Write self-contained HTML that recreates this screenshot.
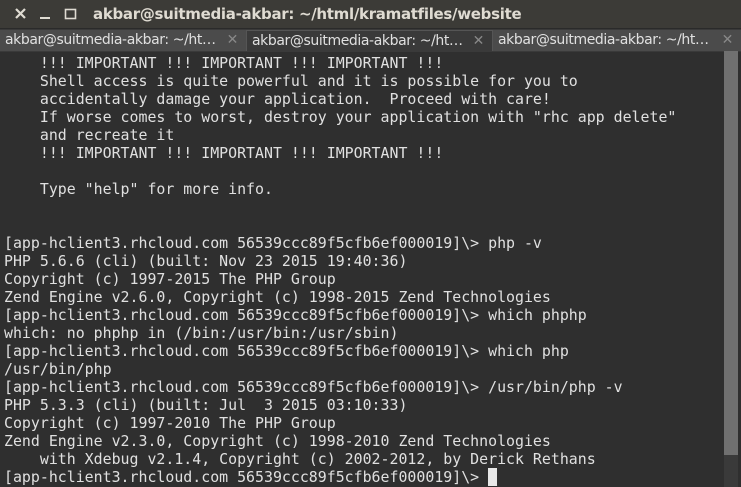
<!DOCTYPE html>
<html><head><meta charset="utf-8"><style>
body{margin:0;width:741px;height:487px;overflow:hidden;background:#2f2f2f;font-family:"Liberation Sans","DejaVu Sans",sans-serif;position:relative}
#title{position:absolute;left:0;top:0;width:741px;height:28px;background:#3c3b37;color:#dfdbd2}
#title .t{position:absolute;left:93px;top:5px;font-weight:bold;font-size:15px;font-family:"DejaVu Sans",sans-serif;letter-spacing:-0.3px}
#tabs{position:absolute;left:0;top:28px;width:741px;height:23px;background:#3a3a3a;border-top:1px solid #2a2a2a}
.tab{position:absolute;top:1px;height:21px;background:#4b4b4b;color:#e0e0e0;font-size:14px;font-family:"DejaVu Sans",sans-serif;line-height:20px;padding-left:5px;box-sizing:border-box;letter-spacing:-0.4px}
.tab.a{background:#3a3a3a;border:1px solid #555;border-bottom:none}
.tab .x{position:absolute;right:8px;top:0;color:#888}
#term{position:absolute;left:4px;top:54px;margin:0;font-family:"DejaVu Sans Mono",monospace;font-size:14.9px;line-height:18px;color:#e0e0e0;white-space:pre}
#sb{position:absolute;left:724px;top:51px;width:14px;height:436px;background:#3a3a3a}
#th{position:absolute;left:724px;top:51px;width:14px;height:404px;background:#707070}
.cur{background:#e8e8e8;color:#e8e8e8}
</style></head><body>
<div id="title">
<svg width="90" height="28" style="position:absolute;left:0;top:0">
<path d="M16 9 L25 18 M25 9 L16 18" stroke="#dfdbd2" stroke-width="2.2"/>
<rect x="40" y="17" width="10" height="2" fill="#dfdbd2"/>
<rect x="65.5" y="9.5" width="10" height="9" fill="none" stroke="#dfdbd2" stroke-width="1.6"/>
</svg>
<div class="t">akbar@suitmedia-akbar: ~/html/kramatfiles/website</div>
</div>
<div id="tabs">
<div class="tab" style="left:0;width:246px">akbar@suitmedia-akbar: ~/ht…<span class="x">✕</span></div>
<div class="tab a" style="left:246px;width:247px">akbar@suitmedia-akbar: ~/ht…<span class="x">✕</span></div>
<div class="tab" style="left:493px;width:248px">akbar@suitmedia-akbar: ~/ht…<span class="x">✕</span></div>
</div>
<div id="sb"></div><div id="th"></div>
<pre id="term">    !!! IMPORTANT !!! IMPORTANT !!! IMPORTANT !!!
    Shell access is quite powerful and it is possible for you to
    accidentally damage your application.  Proceed with care!
    If worse comes to worst, destroy your application with "rhc app delete"
    and recreate it
    !!! IMPORTANT !!! IMPORTANT !!! IMPORTANT !!!

    Type "help" for more info.


[app-hclient3.rhcloud.com 56539ccc89f5cfb6ef000019]\> php -v
PHP 5.6.6 (cli) (built: Nov 23 2015 19:40:36)
Copyright (c) 1997-2015 The PHP Group
Zend Engine v2.6.0, Copyright (c) 1998-2015 Zend Technologies
[app-hclient3.rhcloud.com 56539ccc89f5cfb6ef000019]\> which phphp
which: no phphp in (/bin:/usr/bin:/usr/sbin)
[app-hclient3.rhcloud.com 56539ccc89f5cfb6ef000019]\> which php
/usr/bin/php
[app-hclient3.rhcloud.com 56539ccc89f5cfb6ef000019]\> /usr/bin/php -v
PHP 5.3.3 (cli) (built: Jul  3 2015 03:10:33)
Copyright (c) 1997-2010 The PHP Group
Zend Engine v2.3.0, Copyright (c) 1998-2010 Zend Technologies
    with Xdebug v2.1.4, Copyright (c) 2002-2012, by Derick Rethans
[app-hclient3.rhcloud.com 56539ccc89f5cfb6ef000019]\> <span class="cur">_</span></pre>
</body></html>
